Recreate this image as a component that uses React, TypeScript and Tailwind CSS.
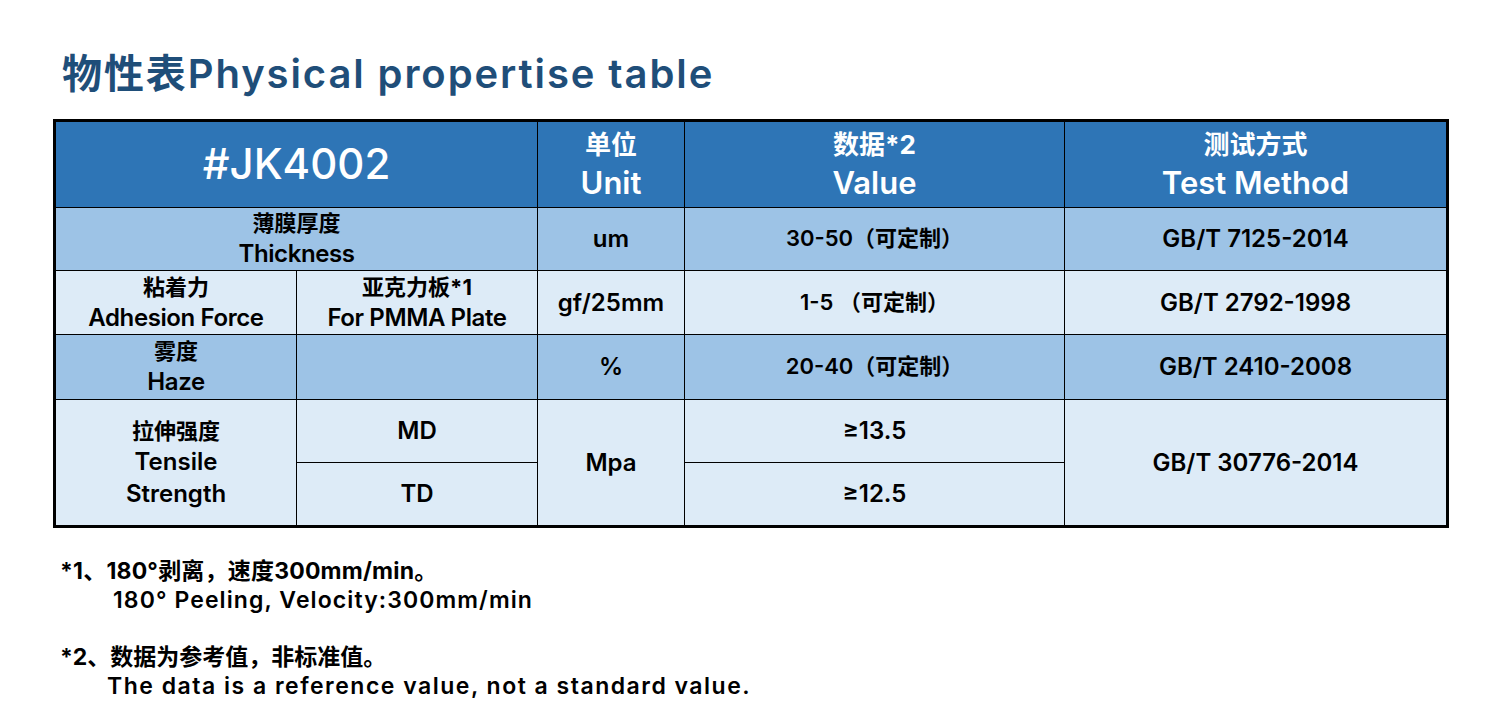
const font = { fontFamily: 'Inter, "Noto Sans CJK SC", sans-serif' };

function Cell({
  children,
  className = '',
  colSpan,
  rowSpan,
}: {
  children?: React.ReactNode;
  className?: string;
  colSpan?: number;
  rowSpan?: number;
}) {
  return (
    <td
      colSpan={colSpan}
      rowSpan={rowSpan}
      className={`border-[1.5px] border-black text-center align-middle p-0 leading-tight ${className}`}
    >
      {children}
    </td>
  );
}

function Two({ zh, en }: { zh: string; en: string }) {
  return (
    <div className="flex flex-col items-center">
      <span className="text-[22px] font-bold leading-[30px]">{zh}</span>
      <span className="text-[24px] font-semibold leading-[32px] tracking-[-0.4px]">{en}</span>
    </div>
  );
}

function Head({ zh, en }: { zh: string; en: string }) {
  return (
    <div className="flex flex-col items-center">
      <span className="text-[26px] font-bold leading-[36px]">{zh}</span>
      <span className="text-[31px] font-semibold leading-[40px]">{en}</span>
    </div>
  );
}

export default function App() {
  const mid = 'bg-[#9dc3e6]';
  const light = 'bg-[#ddebf7]';
  const val = 'text-[24px] font-semibold';
  return (
    <div className="w-[1500px] h-[727px] bg-white text-black" style={font}>
      <h1 className="pl-[62px] pt-[46px] text-[40px] font-semibold leading-[56px] text-[#1f4e79] tracking-[1.9px]">
        物性表Physical propertise table
      </h1>

      <div className="pl-[53px] pt-[17px]">
        <table className="w-[1393px] table-fixed border-collapse border-[3px] border-black">
          <colgroup>
            <col className="w-[242px]" />
            <col className="w-[241px]" />
            <col className="w-[147px]" />
            <col className="w-[380px]" />
            <col className="w-[383px]" />
          </colgroup>
          <tbody>
            <tr className="h-[87px] bg-[#2e75b6] text-white">
              <Cell colSpan={2} className="text-[42px] font-medium">#JK4002</Cell>
              <Cell><Head zh="单位" en="Unit" /></Cell>
              <Cell><Head zh="数据*2" en="Value" /></Cell>
              <Cell><Head zh="测试方式" en="Test Method" /></Cell>
            </tr>

            <tr className={`h-[63px] ${mid}`}>
              <Cell colSpan={2}><Two zh="薄膜厚度" en="Thickness" /></Cell>
              <Cell className={val}>um</Cell>
              <Cell className="text-[22px] font-semibold">30-50（可定制）</Cell>
              <Cell className={val}>GB/T 7125-2014</Cell>
            </tr>

            <tr className={`h-[64px] ${light}`}>
              <Cell><Two zh="粘着力" en="Adhesion Force" /></Cell>
              <Cell><Two zh="亚克力板*1" en="For PMMA Plate" /></Cell>
              <Cell className={val}>gf/25mm</Cell>
              <Cell className="text-[22px] font-semibold">1-5 （可定制）</Cell>
              <Cell className={val}>GB/T 2792-1998</Cell>
            </tr>

            <tr className={`h-[65px] ${mid}`}>
              <Cell><Two zh="雾度" en="Haze" /></Cell>
              <Cell />
              <Cell className={val}>%</Cell>
              <Cell className="text-[22px] font-semibold">20-40（可定制）</Cell>
              <Cell className={val}>GB/T 2410-2008</Cell>
            </tr>

            <tr className={`h-[63px] ${light}`}>
              <Cell rowSpan={2}>
                <div className="flex flex-col items-center">
                  <span className="text-[22px] font-bold leading-[30px]">拉伸强度</span>
                  <span className="text-[24px] font-semibold leading-[32px]">Tensile</span>
                  <span className="text-[24px] font-semibold leading-[32px]">Strength</span>
                </div>
              </Cell>
              <Cell className={val}>MD</Cell>
              <Cell rowSpan={2} className={val}>Mpa</Cell>
              <Cell className={val}>≥13.5</Cell>
              <Cell rowSpan={2} className={val}>GB/T 30776-2014</Cell>
            </tr>
            <tr className={`h-[64px] ${light}`}>
              <Cell className={val}>TD</Cell>
              <Cell className={val}>≥12.5</Cell>
            </tr>
          </tbody>
        </table>
      </div>

      <div className="pl-[60px] pt-[29px] text-[23px] leading-[29px] font-semibold">
        <p className="font-bold tracking-[0.2px]">*1、180°剥离，速度300mm/min。</p>
        <p className="pl-[53px] tracking-[1.1px]">180° Peeling, Velocity:300mm/min</p>
        <p className="mt-[28px] font-bold">*2、数据为参考值，非标准值。</p>
        <p className="pl-[47px] tracking-[1.5px]">The data is a reference value, not a standard value.</p>
      </div>
    </div>
  );
}
